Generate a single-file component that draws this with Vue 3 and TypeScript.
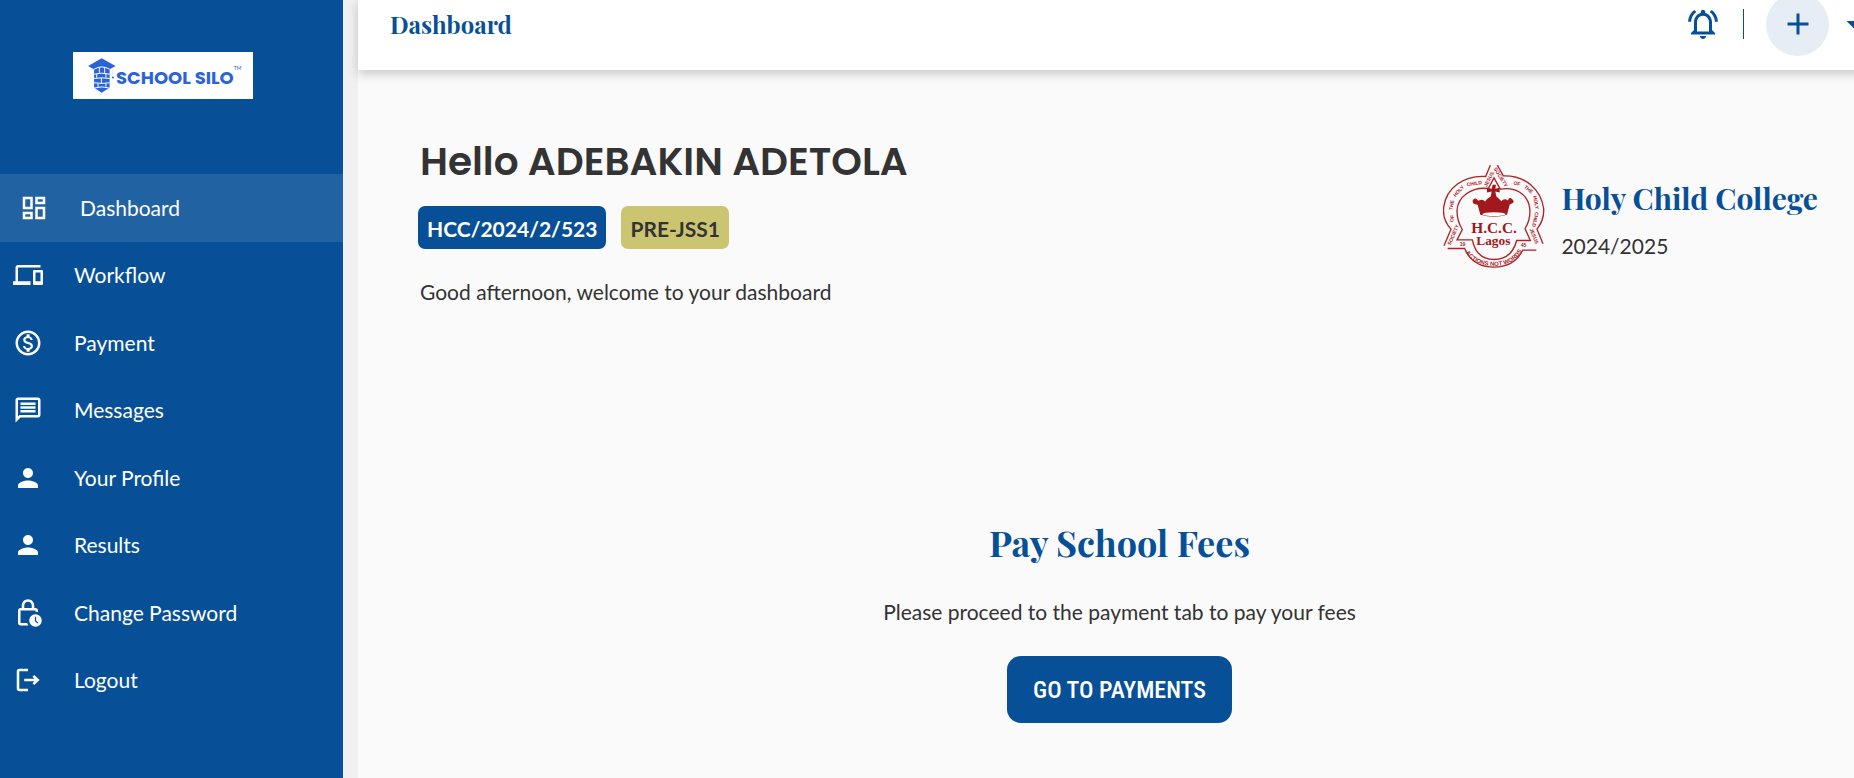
<script setup lang="ts">
interface NavItem {
  label: string
  icon: string
  active?: boolean
}

interface CrestWord {
  text: string
  x: number
  y: number
  angle: number
}

const person =
  'M12 12c2.21 0 4-1.79 4-4s-1.79-4-4-4-4 1.79-4 4 1.79 4 4 4zm0 2c-2.67 0-8 1.34-8 4v2h16v-2c0-2.66-5.33-4-8-4z'

const navItems: NavItem[] = [
  {
    label: 'Dashboard',
    active: true,
    icon: 'M19 5v2h-4V5h4M9 5v6H5V5h4m10 8v6h-4v-6h4M9 17v2H5v-2h4M21 3h-8v6h8V3zM11 3H3v10h8V3zm10 8h-8v10h8V11zm-10 4H3v6h8v-6z',
  },
  {
    label: 'Workflow',
    icon: 'M4 6h18V4H4c-1.1 0-2 .9-2 2v11H0v3h14v-3H4V6zm19 2h-6c-.55 0-1 .45-1 1v10c0 .55.45 1 1 1h6c.55 0 1-.45 1-1V9c0-.55-.45-1-1-1zm-1 9h-4v-7h4v7z',
  },
  {
    label: 'Payment',
    icon: 'M12 2C6.48 2 2 6.48 2 12s4.48 10 10 10 10-4.48 10-10S17.52 2 12 2zm0 18c-4.41 0-8-3.59-8-8s3.59-8 8-8 8 3.59 8 8-3.59 8-8 8zm.31-8.86c-1.77-.45-2.34-.94-2.34-1.67 0-.84.79-1.43 2.1-1.43 1.38 0 1.9.66 1.94 1.64h1.71c-.05-1.34-.87-2.57-2.49-2.97V5H10.9v1.69c-1.51.32-2.72 1.3-2.72 2.81 0 1.79 1.49 2.69 3.66 3.21 1.95.46 2.34 1.15 2.34 1.87 0 .53-.39 1.39-2.1 1.39-1.6 0-2.23-.72-2.32-1.64H8.04c.1 1.7 1.36 2.66 2.86 2.97V19h2.34v-1.67c1.52-.29 2.72-1.16 2.73-2.77-.01-2.2-1.9-2.96-3.66-3.42z',
  },
  {
    label: 'Messages',
    icon: 'M20 2H4c-1.1 0-2 .9-2 2v18l4-4h14c1.1 0 2-.9 2-2V4c0-1.1-.9-2-2-2zm0 14H5.17L4 17.17V4h16v12zM6 12h12v2H6zm0-3h12v2H6zm0-3h12v2H6z',
  },
  { label: 'Your Profile', icon: person },
  { label: 'Results', icon: person },
  {
    label: 'Change Password',
    icon: 'M6 22c-1.1 0-2-.9-2-2V10c0-1.1.9-2 2-2h1V6c0-2.76 2.24-5 5-5s5 2.24 5 5v2h1c1.1 0 2 .9 2 2v1.3c-.6-.2-1.3-.3-2-.3v-1H6v10h5.3c.2.7.6 1.4 1 2H6zM9 8h6V6c0-1.66-1.34-3-3-3S9 4.34 9 6v2zm9 5a5 5 0 1 0 0 10 5 5 0 0 0 0-10zm1.6 7.4l-2.1-2.1V15h1v2.9l1.8 1.8-.7.7z',
  },
  {
    label: 'Logout',
    icon: 'M5 3h7v2H5v14h7v2H5c-1.1 0-2-.9-2-2V5c0-1.1.9-2 2-2zm12 5l4.3 4-4.3 4-1.4-1.4L17.2 13H9v-2h8.2l-1.6-1.6z',
  },
]

const crestWords: CrestWord[] = [
  { text: 'SOCIETY', x: 55, y: 229, angle: -67 },
  { text: 'OF', x: 51, y: 180, angle: -82 },
  { text: 'THE', x: 50, y: 140, angle: -80 },
  { text: 'HOLY', x: 71, y: 98, angle: -48 },
  { text: 'CHILD', x: 118, y: 75, angle: -8 },
  { text: 'JESUS', x: 162, y: 62, angle: -62 },
  { text: 'SOCIETY', x: 197, y: 56, angle: 58 },
  { text: 'OF', x: 246, y: 75, angle: 12 },
  { text: 'THE', x: 281, y: 93, angle: 40 },
  { text: 'HOLY', x: 303, y: 132, angle: 78 },
  { text: 'CHILD', x: 301, y: 183, angle: 102 },
  { text: 'JESUS', x: 297, y: 233, angle: 68 },
]
</script>

<template>
  <div class="app">
    <aside class="sidebar">
      <a class="logo" href="#" aria-label="School Silo home">
        <svg class="logo-mark" viewBox="0 0 84 106" aria-hidden="true">
          <path class="fill" d="M41 1 83 24 64 35Q41 18 18 35L0 24Z" />
          <path class="fill" d="M18 34Q41 18 65 34V90L41 105 18 90Z" />
          <path
            class="joint"
            d="M18 34Q41 20 65 34M18 49Q41 43 65 49M18 62Q41 58 65 62M18 75Q41 79 65 75M18 91Q41 84 65 91M34 28V45M50 28V45M26 48V60M54 46V60M40 60V77M30 77V87M54 77V87"
          />
          <path class="tassel" d="M75 30V52" />
          <circle class="fill" cx="75" cy="59" r="3" />
        </svg>
        <span class="logo-name">SCHOOL SILO</span>
        <span class="logo-tm">TM</span>
      </a>
      <nav class="nav">
        <a
          v-for="item in navItems"
          :key="item.label"
          href="#"
          class="nav-item"
          :class="{ active: item.active }"
        >
          <svg class="nav-icon" viewBox="0 0 24 24" aria-hidden="true">
            <path :d="item.icon" fill-rule="evenodd" />
          </svg>
          <span>{{ item.label }}</span>
        </a>
      </nav>
    </aside>

    <div class="page">
      <header class="topbar">
        <h2 class="topbar-title">Dashboard</h2>
        <div class="actions">
          <button class="icon-button" type="button" aria-label="Notifications">
            <svg viewBox="0 0 24 24" aria-hidden="true">
              <path
                d="M12 22c1.1 0 2-.9 2-2h-4c0 1.1.9 2 2 2zm6-6v-5c0-3.07-1.63-5.64-4.5-6.32V4c0-.83-.67-1.5-1.5-1.5s-1.5.67-1.5 1.5v.68C7.64 5.36 6 7.92 6 11v5l-2 2v1h16v-1l-2-2zm-2 1H8v-6c0-2.48 1.51-4.5 4-4.5s4 2.02 4 4.5v6zM7.58 4.08L6.15 2.65C3.75 4.48 2.17 7.3 2.03 10.5h2c.15-2.65 1.51-4.97 3.55-6.42zm12.39 6.42h2c-.15-3.2-1.73-6.02-4.12-7.85l-1.42 1.43c2.02 1.45 3.39 3.77 3.54 6.42z"
              />
            </svg>
          </button>
          <span class="divider"></span>
          <div class="account">
            <button class="round-button" type="button" aria-label="Add">
              <svg viewBox="0 0 24 24" aria-hidden="true">
                <path d="M19 13h-6v6h-2v-6H5v-2h6V5h2v6h6v2z" />
              </svg>
            </button>
            <button class="icon-button" type="button" aria-label="Open menu">
              <svg viewBox="0 0 24 24" aria-hidden="true"><path d="M7 10l5 5 5-5z" /></svg>
            </button>
          </div>
        </div>
      </header>

      <main class="content">
        <section class="hero">
          <div class="intro">
            <h1>Hello ADEBAKIN ADETOLA</h1>
            <div class="badges">
              <span class="badge badge-id">HCC/2024/2/523</span>
              <span class="badge badge-class">PRE-JSS1</span>
            </div>
            <p>Good afternoon, welcome to your dashboard</p>
          </div>

          <div class="school">
            <svg class="crest" viewBox="24 20 306 308" role="img" aria-label="Holy Child College crest">
              <defs>
                <path id="arc-base" d="M92 282 Q118 322 176 322 Q236 322 262 276" />
              </defs>
              <g class="outline">
                <path d="M166 20 152 54C86 50 34 88 26 146Q22 184 48 212L27 262M38 270H89Q112 326 178 326 239 325 263 275H304" />
                <path d="M187 20 205 52C270 50 318 92 326 150Q328 184 306 212L324 256" />
                <path d="M177 58 160 90C108 84 68 116 66 156Q66 188 82 213L66 244H112Q124 303 177 303 230 303 245 246H286L270 210Q288 182 284 148C278 106 240 84 196 92Z" />
              </g>
              <g class="crown">
                <path d="M173 79h10l-2 12 13-3v14l-13-3 3 15q7 5 15 14 8-10 20-2 3-12 13-4 9 9-3 14l-5 3-8 30q-39 12-80 0l-8-30q-17-2-15-13 7-13 17 1 13-7 20 2 5-8 17-15l3-15-14 3v-14l14 3z" />
                <ellipse cx="177" cy="167" rx="35" ry="6" />
              </g>
              <g class="letters">
                <text x="177" y="222" font-size="46" text-anchor="middle">H.C.C.</text>
                <text x="175" y="260" font-size="40" text-anchor="middle">Lagos</text>
              </g>
              <g class="motto">
                <text
                  v-for="(word, index) in crestWords"
                  :key="index"
                  :transform="`translate(${word.x} ${word.y}) rotate(${word.angle})`"
                  y="5"
                  text-anchor="middle"
                >
                  {{ word.text }}
                </text>
                <text class="motto-base"><textPath href="#arc-base">ACTIONS NOT WORDS</textPath></text>
                <text x="74" y="262">19</text>
                <text x="257" y="266">45</text>
              </g>
            </svg>
            <div class="school-text">
              <h2>Holy Child College</h2>
              <p>2024/2025</p>
            </div>
          </div>
        </section>

        <section class="fees">
          <h2>Pay School Fees</h2>
          <p>Please proceed to the payment tab to pay your fees</p>
          <button class="pay-button" type="button">GO TO PAYMENTS</button>
        </section>
      </main>
    </div>
  </div>
</template>

<style>
html,
body {
  margin: 0;
  background: #f0f0f0;
}
</style>

<style scoped>
.app {
  display: flex;
  gap: 15px;
  min-height: 100vh;
  overflow: hidden;
  color: #333;
  font-family: Lato, sans-serif;
  font-size: 21px;
  line-height: 30px;
}

h1,
h2,
p {
  margin: 0;
}

button {
  padding: 0;
  border: 0;
  background: none;
  cursor: pointer;
}

.sidebar {
  display: flex;
  flex: 0 0 343px;
  flex-direction: column;
  align-items: stretch;
  gap: 75px;
  box-sizing: border-box;
  padding-top: 52px;
  background: #075098;
}

.logo {
  display: flex;
  align-items: center;
  align-self: flex-start;
  box-sizing: border-box;
  width: 180px;
  height: 47px;
  margin-left: 73px;
  padding-left: 15px;
  background: #fff;
  color: #2a62d8;
  text-decoration: none;
}

.logo-mark {
  width: 28px;
  height: 35px;
}

.logo-mark .fill {
  fill: #2a62d8;
}

.logo-mark .joint {
  fill: none;
  stroke: #fff;
  stroke-width: 3;
}

.logo-mark .tassel {
  fill: none;
  stroke: #a9c0f0;
  stroke-width: 1;
}

.logo-name {
  padding-top: 5px;
  font-family: Poppins, Inter, sans-serif;
  font-size: 18px;
  font-weight: 700;
  white-space: nowrap;
}

.logo-tm {
  align-self: flex-start;
  padding-top: 14px;
  font-size: 5px;
  line-height: 5px;
}

.nav {
  display: grid;
  grid-template-rows: repeat(8, 1fr);
  height: 540px;
}

.nav-item {
  display: flex;
  align-items: center;
  gap: 31px;
  padding-left: 13px;
  color: #fff;
  text-decoration: none;
}

.nav-item.active {
  padding-left: 19px;
  background: #2162a2;
}

.nav-icon {
  width: 30px;
  height: 30px;
  fill: #fff;
}

/* The page runs slightly past the right edge of the window. */
.page {
  flex: 0 0 calc(100% - 331px);
  background: #fafafa;
}

.topbar {
  display: flex;
  align-items: center;
  justify-content: space-between;
  height: 48px;
  padding: 0 9px 22px 32px;
  background: #fff;
  box-shadow: 0 4px 10px rgba(0, 0, 0, 0.2);
}

.topbar-title,
.school-text h2,
.fees h2 {
  color: #075098;
  font-family: "Playfair Display", "Liberation Serif", serif;
  font-weight: 700;
}

.topbar-title {
  font-size: 24px;
  line-height: 32px;
}

.actions {
  display: flex;
  align-items: center;
  gap: 22px;
}

.account {
  display: flex;
  align-items: center;
  gap: 7px;
}

.icon-button,
.round-button {
  display: flex;
  align-items: center;
  justify-content: center;
}

.icon-button svg,
.round-button svg {
  width: 36px;
  height: 36px;
  fill: #075098;
}

.round-button {
  width: 63px;
  height: 63px;
  border-radius: 50%;
  background: #e6edf5;
}

.divider {
  width: 1px;
  height: 30px;
  background: #075098;
}

.content {
  display: flex;
  flex-direction: column;
  gap: 210px;
  padding-top: 68px;
}

.hero {
  display: flex;
  align-items: center;
  justify-content: space-between;
  padding: 0 63px 0 60px;
}

.intro h1 {
  padding: 0 2px 20px;
  font-family: Poppins, Inter, sans-serif;
  font-size: 39px;
  font-weight: 600;
  line-height: 48px;
}

.intro p {
  padding: 28px 2px 0;
}

.badges {
  display: flex;
  gap: 15px;
}

.badge {
  padding: 8px 9px 5px;
  border-radius: 7px;
  font-weight: 700;
}

.badge-id {
  background: #075098;
  color: #fff;
}

.badge-class {
  background: #cbc571;
}

.school {
  display: flex;
  align-items: center;
  gap: 16px;
  padding-bottom: 13px;
}

.crest {
  width: 102px;
  height: 103px;
}

.crest .outline {
  fill: none;
  stroke: #ac2226;
  stroke-width: 4;
}

.crest .crown path {
  fill: #a3181c;
}

.crest .crown ellipse {
  fill: #fafafa;
}

.crest .letters {
  fill: #a3181c;
  font-family: "Old English Text MT", "Liberation Serif", serif;
  font-weight: 700;
}

.crest .motto {
  fill: #ac2226;
  font-family: "Liberation Sans", sans-serif;
  font-size: 15px;
  font-weight: 700;
}

.crest .motto-base {
  font-size: 18px;
}

.school-text {
  display: flex;
  flex-direction: column;
  gap: 13px;
  padding-top: 6px;
}

.school-text h2 {
  font-size: 30px;
  line-height: 40px;
}

.fees {
  display: flex;
  flex-direction: column;
  align-items: center;
  gap: 29px;
}

.fees h2 {
  font-size: 36px;
  line-height: 51px;
}

.pay-button {
  padding: 1px 26px 0;
  border-radius: 14px;
  background: #075098;
  color: #fff;
  font-family: "Roboto Condensed", "Liberation Sans Narrow", Roboto, sans-serif;
  font-size: 24px;
  font-weight: 500;
  line-height: 66px;
}
</style>
